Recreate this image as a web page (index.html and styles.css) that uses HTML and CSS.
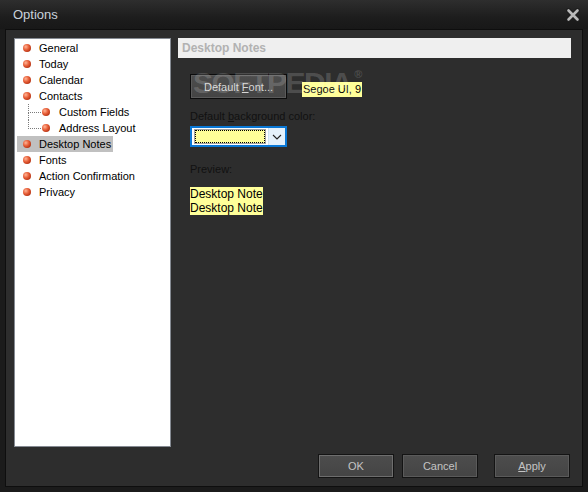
FILE: index.html
```html
<!DOCTYPE html>
<html>
<head>
<meta charset="utf-8">
<link rel="stylesheet" href="styles.css">
</head>
<body>
<div class="window">
  <div class="titlebar">
    <span class="title">Options</span>
    <svg class="close" width="14" height="14" viewBox="0 0 14 14">
      <path d="M2.5 2.5 L11.5 11.5 M11.5 2.5 L2.5 11.5" stroke="#1e1e1e" stroke-width="5" stroke-linecap="round"/>
      <path d="M2.5 2.5 L11.5 11.5 M11.5 2.5 L2.5 11.5" stroke="#b9b9b9" stroke-width="2.6" stroke-linecap="round"/>
    </svg>
  </div>
  <div class="frame">
    <div class="content">
      <div class="main">
        <div class="tree">
          <div class="row"><span class="item"><i class="dot"></i><span>General</span></span></div>
          <div class="row"><span class="item"><i class="dot"></i><span>Today</span></span></div>
          <div class="row"><span class="item"><i class="dot"></i><span>Calendar</span></span></div>
          <div class="row"><span class="item"><i class="dot"></i><span>Contacts</span></span></div>
          <div class="row child mid"><span class="item"><i class="dot"></i><span>Custom Fields</span></span></div>
          <div class="row child last"><span class="item"><i class="dot"></i><span>Address Layout</span></span></div>
          <div class="row"><span class="item sel"><i class="dot"></i><span>Desktop Notes</span></span></div>
          <div class="row"><span class="item"><i class="dot"></i><span>Fonts</span></span></div>
          <div class="row"><span class="item"><i class="dot"></i><span>Action Confirmation</span></span></div>
          <div class="row"><span class="item"><i class="dot"></i><span>Privacy</span></span></div>
        </div>
        <div class="panel">
          <div class="header">Desktop Notes</div>
          <div class="pbody">
            <div class="fontrow">
              <div class="btn fontbtn"><span>Default <u>F</u>ont...</span></div>
              <div class="fontlabel">Segoe UI, 9</div>
            </div>
            <div class="label lbl-bg">Default <u>b</u>ackground color:</div>
            <div class="combo">
              <div class="combo-field"><div class="swatch"></div></div>
              <div class="combo-arrow">
                <svg width="10" height="6" viewBox="0 0 10 6"><path d="M1 1 L5 5 L9 1" fill="none" stroke="#222" stroke-width="1.1"/></svg>
              </div>
            </div>
            <div class="label lbl-prev">Preview:</div>
            <div class="preview">
              <div class="pline">Desktop Note</div>
              <div class="pline">Desktop Note</div>
            </div>
          </div>
          <div class="watermark">SOFTPEDIA<sup>®</sup></div>
        </div>
      </div>
      <div class="footer">
        <div class="btn dlg default"><span>OK</span></div>
        <div class="btn dlg"><span>Cancel</span></div>
        <div class="btn dlg apply"><span><u>A</u>pply</span></div>
      </div>
    </div>
  </div>
</div>
</body>
</html>
```

FILE: styles.css
```css
html, body {
  margin: 0;
  padding: 0;
  background: #1b1b1b;
}
.window {
  width: 588px;
  height: 492px;
  display: flex;
  flex-direction: column;
  background: #1b1b1b;
  font-family: "Liberation Sans", Arial, sans-serif;
  font-size: 11px;
  overflow: hidden;
}
.titlebar {
  height: 29px;
  box-sizing: border-box;
  padding: 7px 8px 0 13px;
  display: flex;
  justify-content: space-between;
  align-items: flex-start;
  background: linear-gradient(#2e2e2e, #1d1d1d 60%, #181818);
}
.title {
  font-size: 13px;
  line-height: 16px;
  color: #c9d2db;
}
.close {
  margin-top: 1px;
}
.frame {
  flex: 1;
  margin: 0 5px 5px 5px;
  border: 1px solid #0e0e0e;
  display: flex;
}
.content {
  flex: 1;
  background: #2d2d2d;
  padding: 8px 11px 8px 8px;
  display: flex;
  flex-direction: column;
}
.main {
  flex: 1;
  display: flex;
  gap: 7px;
}
.tree {
  width: 157px;
  box-sizing: border-box;
  background: #fff;
  border: 1px solid #858a92;
  padding: 1px 0 0 2px;
}
.row {
  height: 16px;
  line-height: 16px;
  position: relative;
  color: #000;
}
.item {
  display: inline-flex;
  align-items: center;
  height: 16px;
  padding: 0 2px 0 6px;
  gap: 8px;
}
.item.sel {
  background: #c0c0c0;
}
.dot {
  display: block;
  width: 8px;
  height: 8px;
  border-radius: 50%;
  background: radial-gradient(circle at 35% 35%, #ffb596 0%, #e8603a 40%, #b83413 75%, #7a1e08 100%);
}
.row.child .item {
  padding-left: 25px;
  gap: 9px;
}
.row.child::before {
  content: "";
  position: absolute;
  left: 11px;
  top: 0;
  width: 12px;
  height: 8px;
  border-left: 1px dotted #7a7a7a;
  border-bottom: 1px dotted #7a7a7a;
}
.row.child.mid::after {
  content: "";
  position: absolute;
  left: 11px;
  top: 8px;
  height: 8px;
  border-left: 1px dotted #7a7a7a;
}
.panel {
  flex: 1;
  position: relative;
  display: flex;
  flex-direction: column;
}
.header {
  height: 20px;
  line-height: 20px;
  background: #efefef;
  padding-left: 4px;
  font-size: 12px;
  font-weight: bold;
  color: #b2b2b2;
}
.pbody {
  padding: 16px 0 0 12px;
  display: flex;
  flex-direction: column;
  align-items: flex-start;
}
.fontrow {
  display: flex;
  align-items: flex-end;
  gap: 15px;
}
.btn {
  box-sizing: border-box;
  display: flex;
  align-items: center;
  justify-content: center;
  border: 1px solid #141414;
  background: linear-gradient(#4d4d4d, #444444);
  box-shadow: inset 0 0 0 1px #5a5a5a;
  color: #c4c4c4;
  font-size: 11px;
}
.btn u {
  text-decoration: underline;
}
.fontbtn {
  width: 97px;
  height: 25px;
  color: #d6d6d6;
  border-color: #0c0c0c;
}
.fontlabel {
  height: 15px;
  line-height: 15px;
  margin-bottom: 2px;
  padding: 0 1px;
  background: #ffff99;
  color: #000;
  font-size: 11px;
}
.label {
  color: #111;
  line-height: 13px;
  font-size: 11px;
}
.lbl-bg {
  margin-top: 11px;
}
.combo {
  margin-top: 3px;
  width: 97px;
  height: 21px;
  box-sizing: border-box;
  border: 2px solid #0a78d6;
  background: #fff;
  display: flex;
}
.combo-field {
  flex: 1;
  padding: 1px 2px;
  display: flex;
}
.swatch {
  flex: 1;
  background: #ffff99;
  border: 1px solid #a0a0a0;
  outline: 1px dotted #000;
  outline-offset: -2px;
}
.combo-arrow {
  width: 16px;
  background: #e5f1fb;
  border-left: 1px solid #cfe3f4;
  display: flex;
  align-items: center;
  justify-content: center;
}
.lbl-prev {
  margin-top: 16px;
}
.preview {
  margin-top: 11px;
  background: #ffff99;
  color: #000;
  font-size: 12px;
}
.pline {
  height: 14px;
  line-height: 14px;
}
.watermark {
  position: absolute;
  left: 15px;
  top: 30px;
  font-size: 30px;
  font-weight: bold;
  letter-spacing: -1.5px;
  color: rgba(255, 255, 255, 0.17);
  pointer-events: none;
  line-height: 30px;
}
.watermark sup {
  font-size: 11px;
  vertical-align: top;
  letter-spacing: 0;
  margin-left: 3px;
  line-height: 12px;
}
.footer {
  margin-top: 7px;
  height: 24px;
  padding-right: 1px;
  display: flex;
  justify-content: flex-end;
  gap: 8px;
}
.dlg {
  width: 76px;
  height: 24px;
}
.dlg.default {
  box-shadow: inset 0 0 0 1px #6e6e6e;
}
.dlg.apply {
  margin-left: 8px;
}
```
